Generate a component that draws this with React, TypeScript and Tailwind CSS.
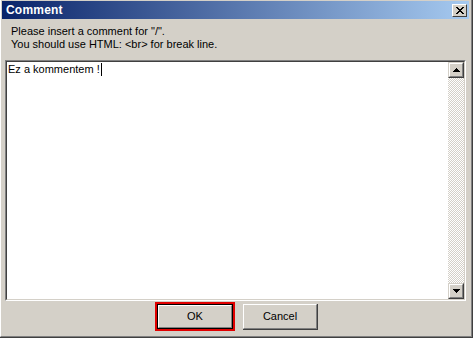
import React from "react";

const font = { fontFamily: '"Liberation Sans", Arial, sans-serif' };

function ArrowUp() {
  return (
    <svg width="7" height="4" viewBox="0 0 7 4" className="block">
      <path d="M3 0h1v1h1v1h1v1h1v1H0V3h1V2h1V1h1z" fill="#000" />
    </svg>
  );
}
function ArrowDown() {
  return (
    <svg width="7" height="4" viewBox="0 0 7 4" className="block">
      <path d="M0 0h7v1H6v1H5v1H4v1H3V3H2V2H1V1H0z" fill="#000" />
    </svg>
  );
}

function ScrollBtn({ children }: { children: React.ReactNode }) {
  return (
    <div className="w-[16px] h-[16px] bg-[#d4d0c8] border-t border-l border-t-[#d4d0c8] border-l-[#d4d0c8] border-r border-b border-r-[#404040] border-b-[#404040]">
      <div className="w-full h-full border-t border-l border-t-white border-l-white border-r border-b border-r-[#808080] border-b-[#808080] flex items-center justify-center">
        {children}
      </div>
    </div>
  );
}

export default function App() {
  return (
    <div
      className="w-[473px] h-[338px] bg-[#d4d0c8] border-r border-b border-r-[#404040] border-b-[#404040] overflow-hidden"
      style={font}
    >
      <div className="w-full h-full border-l border-l-white border-r border-b border-r-[#808080] border-b-[#808080] pl-[1px] pt-[1px] pr-[2px] flex flex-col">
        {/* Title bar */}
        <div className="h-[18px] shrink-0 flex items-center justify-between bg-linear-to-r/srgb from-[#0a246a] to-[#a6caf0] pl-[4px] pr-[2px]">
          <span className="text-white font-bold text-[12px] leading-none tracking-[0.2px]">Comment</span>
          <div className="w-[15px] h-[13px] bg-[#d4d0c8] border-t border-l border-t-white border-l-white border-r border-b border-r-[#404040] border-b-[#404040] flex items-center justify-center">
            <svg width="8" height="7" viewBox="0 0 8 7" className="block">
              <path d="M0 0h2v1h1v1h2V1h1V0h2v1H7v1H6v1H5v1h1v1h1v1h1v1H6V6H5V5H3v1H2v1H0V6h1V5h1V4h1V3H2V2H1V1H0z" fill="#000" />
            </svg>
          </div>
        </div>
        {/* Message */}
        <div className="pl-[9px] pt-[6px] text-[11px] leading-[13px] text-black h-[41px] shrink-0">
          <div>Please insert a comment for "/".</div>
          <div>You should use HTML: &lt;br&gt; for break line.</div>
        </div>
        {/* Textarea */}
        <div className="mx-[3px] h-[241px] shrink-0 border-t border-l border-t-[#808080] border-l-[#808080] border-r border-b border-r-white border-b-white">
          <div className="w-full h-full border-t border-l border-t-[#404040] border-l-[#404040] border-r border-b border-r-[#d4d0c8] border-b-[#d4d0c8] bg-white flex">
            <div className="flex-1 pl-[1px] pt-[1px] text-[11px] leading-[13px] text-black">
              Ez a kommentem !<span className="inline-block w-[1px] h-[13px] bg-black align-top ml-[1px]" />
            </div>
            <div className="w-[16px] flex flex-col">
              <ScrollBtn>
                <ArrowUp />
              </ScrollBtn>
              <div className="flex-1 bg-[image:repeating-conic-gradient(#d4d0c8_0_25%,#ffffff_0_50%)] bg-[length:2px_2px]" />
              <ScrollBtn>
                <ArrowDown />
              </ScrollBtn>
            </div>
          </div>
        </div>
        {/* Buttons */}
        <div className="flex justify-center items-center gap-[8px] pt-[1px] pl-[2px]">
          <div className="w-[80px] h-[29px] border-2 border-[#e00000] bg-black p-[1px]">
            <div className="w-full h-full bg-[#d4d0c8] border-t border-l border-t-white border-l-white border-r border-b border-r-[#808080] border-b-[#808080] flex items-center justify-center text-[11px] text-black">
              OK
            </div>
          </div>
          <div className="w-[75px] h-[26px] bg-[#d4d0c8] border-r border-b border-r-[#404040] border-b-[#404040]">
            <div className="w-full h-full border-t border-l border-t-white border-l-white border-r border-b border-r-[#808080] border-b-[#808080] flex items-center justify-center text-[11px] text-black">
              Cancel
            </div>
          </div>
        </div>
      </div>
    </div>
  );
}
